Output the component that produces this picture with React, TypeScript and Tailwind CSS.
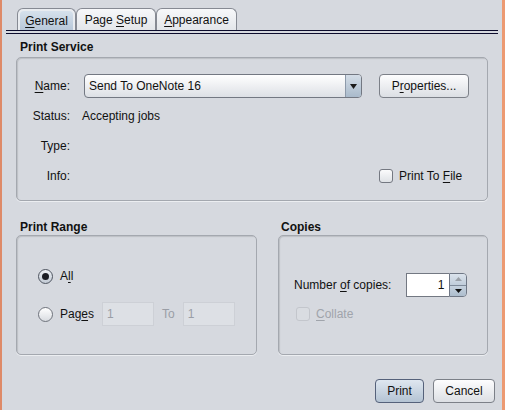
import React from 'react';

const font = { fontFamily: '"Liberation Sans", Arial, sans-serif' };

const U: React.FC<{ children: React.ReactNode }> = ({ children }) => <span className="underline underline-offset-[2px]">{children}</span>;

const Panel: React.FC<{ className?: string; children?: React.ReactNode }> = ({ className = '', children }) => (
  <div className={`rounded-[5px] border border-[#a4a8af] shadow-[inset_1px_1px_1px_rgba(0,0,0,0.12),0_1px_0_#eceef1] ${className}`}>{children}</div>
);

const Checkbox: React.FC<{ disabled?: boolean }> = ({ disabled }) => (
  <div
    className={`w-[14px] h-[14px] rounded-[3px] border ${
      disabled ? 'border-[#c3c6cc] bg-[#d9dce1]' : 'border-[#747881] bg-gradient-to-b from-[#fbfbfc] to-[#dfe2e6]'
    }`}
  />
);

const Radio: React.FC<{ checked?: boolean }> = ({ checked }) => (
  <div
    className={`w-[15px] h-[15px] rounded-full border flex items-center justify-center ${
      checked ? 'border-[#4f5560] bg-gradient-to-b from-[#eef1f5] to-[#c2cad4]' : 'border-[#6f737c] bg-gradient-to-b from-[#ffffff] to-[#d9dce1]'
    }`}
  >
    {checked && <div className="w-[7px] h-[7px] rounded-full bg-[#1b1d24]" />}
  </div>
);

const Button: React.FC<{ children: React.ReactNode; className?: string; primary?: boolean }> = ({ children, className = '', primary }) => (
  <div
    className={`h-[24px] rounded-[4px] border flex items-center justify-center text-[12px] text-[#111] ${
      primary ? 'border-[#55617a] bg-gradient-to-b from-[#dfe7f0] to-[#b4c3d3]' : 'border-[#7c8088] bg-gradient-to-b from-[#fdfdfe] to-[#dcdfe4]'
    } ${className}`}
  >
    {children}
  </div>
);

const Tab: React.FC<{ children: React.ReactNode; w: string; selected?: boolean }> = ({ children, w, selected }) => (
  <div className={`${w} h-[22px] rounded-t-[6px] border border-b-0 border-[#868a93] ${selected ? 'p-[2px] pb-0 bg-[#e9ecf0]' : 'bg-gradient-to-b from-[#f7f8fa] to-[#e3e6ea]'}`}>
    <div className={`h-full flex items-center justify-center text-[12px] text-[#111] rounded-t-[4px] ${selected ? 'bg-gradient-to-b from-[#d6e1ec] to-[#b8c8d9]' : ''}`}>
      {children}
    </div>
  </div>
);

export default function App() {
  return (
    <div className="w-[505px] h-[410px] flex bg-[#d6d9df] overflow-hidden" style={font}>
      <div className="w-[2px] bg-[#de8a68]" />
      <div className="w-[500px] flex flex-col">
        <div className="pt-[8px] pl-[15px] flex">
          <Tab w="w-[59px]" selected>
            <span><U>G</U>eneral</span>
          </Tab>
          <Tab w="w-[80px]">
            <span>Page <U>S</U>etup</span>
          </Tab>
          <Tab w="w-[81px]">
            <span><U>A</U>ppearance</span>
          </Tab>
        </div>
        <div className="mx-[4px] h-[1px] bg-[#0c0c2c]" />
        <div className="mx-[4px] mt-[2px] h-[1px] bg-[#0c0c2c]" />

        <div className="px-[14px]">
          <div className="mt-[6px] h-[14px] leading-[14px] pl-[4px] text-[12px] font-bold text-[#111]">Print Service</div>
          <Panel className="mt-[3px] h-[144px] pt-[16px] text-[12px] text-[#111]">
            <div className="grid grid-cols-[53px_285px_90px] gap-x-[12px] gap-y-[6px] auto-rows-[24px] items-center">
              <div className="text-right"><U>N</U>ame:</div>
              <div className="ml-[2px] w-[278px] h-[24px] rounded-[4px] border border-[#737882] bg-gradient-to-b from-[#ffffff] to-[#dde0e5] flex">
                <div className="flex-1 flex items-center pl-[4px]">Send To OneNote 16</div>
                <div className="w-[16px] border-l border-[#8d9aaa] rounded-r-[3px] bg-gradient-to-b from-[#d4dde7] to-[#a9bacb] flex items-center justify-center">
                  <svg width="7" height="5" viewBox="0 0 7 5"><path d="M0 0h7L3.5 5z" fill="#1a1a1a" /></svg>
                </div>
              </div>
              <Button>P<U>r</U>operties...</Button>

              <div className="text-right">Status:</div>
              <div>Accepting jobs</div>
              <div />

              <div className="text-right">Type:</div>
              <div />
              <div />

              <div className="text-right">Info:</div>
              <div />
              <div className="flex items-center gap-[6px]">
                <Checkbox />
                <span>Print To <U>F</U>ile</span>
              </div>
            </div>
          </Panel>

          <div className="flex justify-between">
            <div className="w-[241px]">
              <div className="mt-[19px] h-[14px] leading-[14px] pl-[4px] text-[12px] font-bold text-[#111]">Print Range</div>
              <Panel className="mt-[1px] h-[120px] pt-[28px] pl-[21px] text-[12px] text-[#111]">
                <div className="h-[24px] flex items-center gap-[7px]">
                  <Radio checked />
                  <span>A<U>l</U>l</span>
                </div>
                <div className="mt-[14px] h-[24px] flex items-center">
                  <Radio />
                  <span className="ml-[7px]">Pag<U>e</U>s</span>
                  <div className="ml-[8px] w-[52px] h-[24px] border border-[#cdd0d6] bg-[#dde0e5] flex items-center pl-[4px] text-[#9a9ea6]">1</div>
                  <span className="ml-[8px] text-[#9a9ea6]">To</span>
                  <div className="ml-[8px] w-[52px] h-[24px] border border-[#cdd0d6] bg-[#dde0e5] flex items-center pl-[4px] text-[#9a9ea6]">1</div>
                </div>
              </Panel>
            </div>

            <div className="w-[210px]">
              <div className="mt-[19px] h-[14px] leading-[14px] pl-[3px] text-[12px] font-bold text-[#111]">Copies</div>
              <Panel className="mt-[1px] h-[120px] pt-[37px] pl-[15px] text-[12px] text-[#111]">
                <div className="h-[24px] flex items-center">
                  <span>Number <U>o</U>f copies:</span>
                  <div className="ml-[15px] h-[24px] flex">
                    <div className="w-[43px] border border-r-0 border-[#737882] bg-white flex items-center justify-end pr-[5px]">1</div>
                    <div className="w-[18px] flex flex-col border border-[#6f7785] rounded-r-[4px] overflow-hidden">
                      <div className="flex-1 bg-gradient-to-b from-[#dbe3ec] to-[#c0cddb] flex items-center justify-center border-b border-[#7e8a9a]">
                        <svg width="7" height="4" viewBox="0 0 7 4"><path d="M0 4h7L3.5 0z" fill="#9aa0a8" /></svg>
                      </div>
                      <div className="flex-1 bg-gradient-to-b from-[#c6d2df] to-[#adbdcd] flex items-center justify-center">
                        <svg width="7" height="4" viewBox="0 0 7 4"><path d="M0 0h7L3.5 4z" fill="#111" /></svg>
                      </div>
                    </div>
                  </div>
                </div>
                <div className="mt-[5px] ml-[2px] h-[24px] flex items-center gap-[6px] text-[#a0a4ab]">
                  <Checkbox disabled />
                  <span><U>C</U>ollate</span>
                </div>
              </Panel>
            </div>
          </div>
        </div>

        <div className="mt-[24px] pr-[7px] flex justify-end gap-[9px]">
          <Button primary className="w-[49px]">Print</Button>
          <Button className="w-[62px]">Cancel</Button>
        </div>
      </div>
      <div className="w-[3px] bg-[#ec9a72]" />
    </div>
  );
}
